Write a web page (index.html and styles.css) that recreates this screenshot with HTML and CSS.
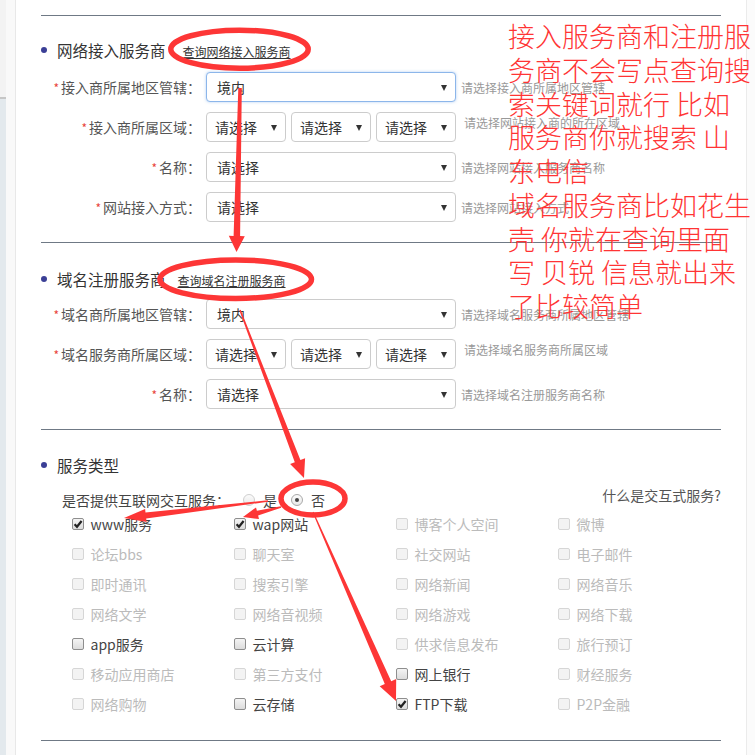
FILE: index.html
```html
<!DOCTYPE html>
<html lang="zh-CN">
<head>
<meta charset="utf-8">
<title>备案信息</title>
<link rel="stylesheet" href="styles.css">
</head>
<body>
<div class="page">
  <div class="side"></div>
  <div class="main">
    <section class="sec s1">
      <h3 class="title"><span class="dot"></span>网络接入服务商<a class="query">查询网络接入服务商</a></h3>
      <div class="rows">
        <div class="row">
          <label class="lbl"><i class="star">*</i>接入商所属地区管辖：</label>
          <div class="sel wide focus">境内</div>
          <span class="hint">请选择接入商所属地区管辖</span>
        </div>
        <div class="row">
          <label class="lbl"><i class="star">*</i>接入商所属区域：</label>
          <div class="trio">
            <div class="sel small">请选择</div>
            <div class="sel small">请选择</div>
            <div class="sel small">请选择</div>
          </div>
          <span class="hint far">请选择网站接入商的所在区域</span>
        </div>
        <div class="row">
          <label class="lbl"><i class="star">*</i>名称：</label>
          <div class="sel wide">请选择</div>
          <span class="hint">请选择网站接入服务商名称</span>
        </div>
        <div class="row">
          <label class="lbl"><i class="star">*</i>网站接入方式：</label>
          <div class="sel wide">请选择</div>
          <span class="hint">请选择网站接入方式</span>
        </div>
      </div>
    </section>

    <section class="sec s2">
      <h3 class="title"><span class="dot"></span>域名注册服务商<a class="query">查询域名注册服务商</a></h3>
      <div class="rows">
        <div class="row">
          <label class="lbl"><i class="star">*</i>域名商所属地区管辖：</label>
          <div class="sel wide">境内</div>
          <span class="hint">请选择域名服务商所属地区管辖</span>
        </div>
        <div class="row">
          <label class="lbl"><i class="star">*</i>域名服务商所属区域：</label>
          <div class="trio">
            <div class="sel small">请选择</div>
            <div class="sel small">请选择</div>
            <div class="sel small">请选择</div>
          </div>
          <span class="hint far">请选择域名服务商所属区域</span>
        </div>
        <div class="row">
          <label class="lbl"><i class="star">*</i>名称：</label>
          <div class="sel wide">请选择</div>
          <span class="hint">请选择域名注册服务商名称</span>
        </div>
      </div>
    </section>

    <section class="sec s3">
      <h3 class="title"><span class="dot"></span>服务类型</h3>
      <div class="ask">
        <span>是否提供互联网交互服务：</span>
        <span class="radio r1"></span><span class="opt">是</span>
        <span class="radio r2 on"></span><span class="opt">否</span>
        <span class="what">什么是交互式服务?</span>
      </div>
      <div class="grid">
        <div class="item"><span class="cb"><svg viewBox="0 0 10 10"><path d="M1.6 5.2 L4 7.8 L8.6 2"/></svg></span>www服务</div>
        <div class="item"><span class="cb"><svg viewBox="0 0 10 10"><path d="M1.6 5.2 L4 7.8 L8.6 2"/></svg></span>wap网站</div>
        <div class="item off"><span class="cb"></span>博客个人空间</div>
        <div class="item off"><span class="cb"></span>微博</div>

        <div class="item off"><span class="cb"></span>论坛bbs</div>
        <div class="item off"><span class="cb"></span>聊天室</div>
        <div class="item off"><span class="cb"></span>社交网站</div>
        <div class="item off"><span class="cb"></span>电子邮件</div>

        <div class="item off"><span class="cb"></span>即时通讯</div>
        <div class="item off"><span class="cb"></span>搜索引擎</div>
        <div class="item off"><span class="cb"></span>网络新闻</div>
        <div class="item off"><span class="cb"></span>网络音乐</div>

        <div class="item off"><span class="cb"></span>网络文学</div>
        <div class="item off"><span class="cb"></span>网络音视频</div>
        <div class="item off"><span class="cb"></span>网络游戏</div>
        <div class="item off"><span class="cb"></span>网络下载</div>

        <div class="item"><span class="cb"></span>app服务</div>
        <div class="item"><span class="cb"></span>云计算</div>
        <div class="item off"><span class="cb"></span>供求信息发布</div>
        <div class="item off"><span class="cb"></span>旅行预订</div>

        <div class="item off"><span class="cb"></span>移动应用商店</div>
        <div class="item off"><span class="cb"></span>第三方支付</div>
        <div class="item"><span class="cb"></span>网上银行</div>
        <div class="item off"><span class="cb"></span>财经服务</div>

        <div class="item off"><span class="cb"></span>网络购物</div>
        <div class="item"><span class="cb"></span>云存储</div>
        <div class="item"><span class="cb"><svg viewBox="0 0 10 10"><path d="M1.6 5.2 L4 7.8 L8.6 2"/></svg></span>FTP下载</div>
        <div class="item off"><span class="cb"></span>P2P金融</div>
      </div>
    </section>
    <div class="endline"></div>
  </div>
  <div class="rside"></div>

  <div class="note">接入服务商和注册服<br>务商不会写点查询搜<br>索关键词就行 比如<br>服务商你就搜索 山<br>东电信<br>域名服务商比如花生<br>壳 你就在查询里面<br>写 贝锐 信息就出来<br>了比较简单</div>

  <svg class="marks" viewBox="0 0 755 755">
    <ellipse cx="239.5" cy="49.2" rx="68.7" ry="19" />
    <ellipse cx="235.7" cy="279.2" rx="75.8" ry="19.3" />
    <ellipse cx="313" cy="498.5" rx="32" ry="16.5" />
    <polygon points="238.3,88 233.6,236 228.8,235.8 236.5,252 244.8,236.2 240.1,236 241.8,88"/>
    <polygon points="239.3,310.3 294.8,462.3 290.1,464 304,478 305.1,458.3 300.4,460.1 240.7,309.7"/>
    <polygon points="267.9,500.3 145.5,512.4 145.1,509 124,518 146.6,521.9 146.2,518.4 268.1,501.7"/>
    <polygon points="280.8,506.3 256.9,510.8 256,507.4 243,517 259,519 258.1,515.6 281.2,507.7"/>
    <polygon points="312.5,512.2 384.8,684.1 379.7,686.3 396,701 396.2,679.1 391.2,681.3 313.5,511.8"/>
  </svg>
</div>
</body>
</html>
```

FILE: styles.css
```css
body {
  margin: 0;
  font-family: "Noto Sans CJK SC", "Noto Sans", sans-serif;
  background: #fff;
}

.page {
  position: relative;
  width: 755px;
  height: 755px;
  display: flex;
  overflow: hidden;
  background: #fff;
}

.side {
  width: 15px;
  border-right: 1px solid #e8e8e8;
  background:
    linear-gradient(to bottom, #f3f3f3 0, #f3f3f3 97px, #c6c6c6 97px, #c6c6c6 99px, #e3e9ed 99px) no-repeat 0 0 / 6px 100%,
    #f9f9f9;
}

.main {
  width: 730px;
  box-sizing: border-box;
  padding: 15px 25px 0;
}

.rside {
  flex: 1;
  border-left: 1px solid #ebebeb;
  background: #fbfbfb;
}

.sec {
  border-top: 1px solid #6f7985;
}

.s1 { padding: 24px 0 20px; }
.s2 { padding: 26px 0 20px; }
.s3 { padding: 25px 0 21px; }

.endline {
  border-top: 1px solid #6f7985;
}

.title {
  display: flex;
  align-items: baseline;
  height: 20px;
  line-height: 20px;
  margin: 0;
  font-size: 15.5px;
  font-weight: normal;
  color: #333;
}

.dot {
  width: 6px;
  height: 6px;
  border-radius: 50%;
  background: #3b3f96;
  margin-right: 10px;
  align-self: center;
}

.query {
  font-size: 12px;
  color: #333;
  text-decoration: underline;
  margin-left: 17px;
}

.s2 .query { margin-left: 12px; }

.rows {
  display: flex;
  flex-direction: column;
  gap: 10px;
  margin-top: 12px;
}

.s2 .rows { margin-top: 10px; }

.row {
  display: flex;
  align-items: center;
  height: 30px;
}

.lbl {
  width: 160px;
  flex: none;
  text-align: right;
  font-size: 14px;
  color: #555;
  margin-right: 5px;
  white-space: nowrap;
}

.star {
  color: #e8453c;
  font-size: 12px;
  font-style: normal;
  margin-right: 2px;
}

.sel {
  position: relative;
  box-sizing: border-box;
  height: 30px;
  border: 1px solid #ccc;
  border-radius: 4px;
  font-size: 14px;
  line-height: 28px;
  color: #333;
  padding-left: 10px;
  background: #fff;
}

.sel::after {
  content: "";
  position: absolute;
  right: 8px;
  top: 12px;
  border-left: 3px solid transparent;
  border-right: 3px solid transparent;
  border-top: 6px solid #333;
}

.wide { width: 250px; }

.focus {
  border-color: #8cb6ea;
  box-shadow: 0 0 3px rgba(102, 160, 233, 0.5);
}

.trio {
  display: flex;
  gap: 5px;
}

.small {
  width: 80px;
  padding-left: 8px;
}

.hint {
  margin-left: 5px;
  font-size: 12px;
  color: #999;
  white-space: nowrap;
}

.hint.far {
  margin-left: 8px;
  align-self: flex-start;
  line-height: 20px;
  margin-top: 1px;
}

.ask {
  display: flex;
  align-items: center;
  height: 20px;
  margin-top: 15px;
  padding-left: 21px;
  font-size: 14px;
  color: #444;
}

.radio {
  position: relative;
  width: 12px;
  height: 12px;
  box-sizing: border-box;
  border-radius: 50%;
  border: 1px solid #cfcfcf;
  background: linear-gradient(#fbfbfb, #e9e9e9);
}

.radio.on {
  border-color: #a9a9a9;
}

.radio.on::after {
  content: "";
  position: absolute;
  left: 3px;
  top: 3px;
  width: 4px;
  height: 4px;
  border-radius: 50%;
  background: #444;
}

.r1 { margin-left: 13px; }
.r2 { margin-left: 14px; }
.opt { margin-left: 8px; }

.what {
  margin-left: auto;
  align-self: flex-start;
  margin-top: -5px;
  line-height: 20px;
  color: #555;
}

.grid {
  display: grid;
  grid-template-columns: repeat(4, 162px);
  grid-auto-rows: 30px;
  margin-top: -1px;
  padding-left: 30.5px;
}

.item {
  display: flex;
  align-items: center;
  font-size: 14px;
  color: #444;
  white-space: nowrap;
}

.item.off { color: #bbb; }

.cb {
  width: 12px;
  height: 12px;
  box-sizing: border-box;
  border: 1px solid #8e8e8e;
  border-radius: 2px;
  background: linear-gradient(#f4f4f4, #dcdcdc);
  margin-right: 7px;
  display: flex;
  align-items: center;
  justify-content: center;
  flex: none;
}

.off .cb {
  border-color: #d6d6d6;
  background: #f3f3f3;
}

.cb svg {
  width: 10px;
  height: 10px;
  fill: none;
  stroke: #222;
  stroke-width: 2.2;
}

.note {
  position: absolute;
  left: 508px;
  top: 19px;
  font-size: 27px;
  font-weight: 300;
  line-height: 33.75px;
  color: #ff3434;
  white-space: nowrap;
}

.marks {
  position: absolute;
  left: 0;
  top: 0;
  width: 755px;
  height: 755px;
  pointer-events: none;
}

.marks ellipse {
  fill: none;
  stroke: #fd3636;
  stroke-width: 5.5;
}

.marks polygon {
  fill: #fd3636;
}
```
